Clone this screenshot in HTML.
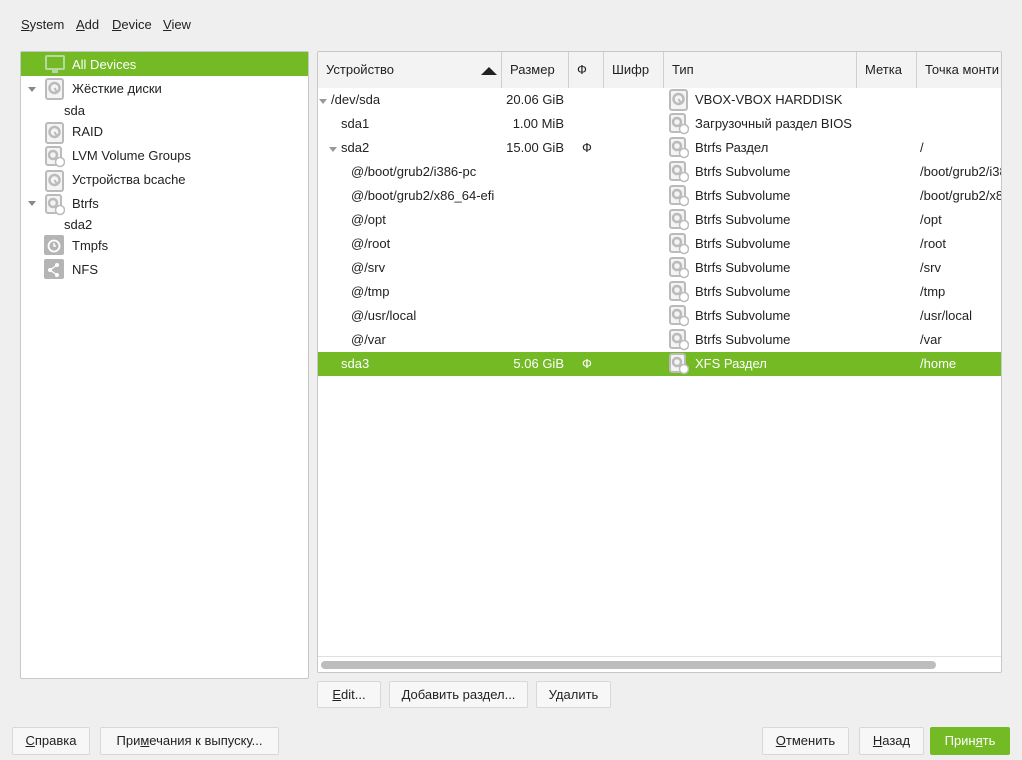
<!DOCTYPE html>
<html><head><meta charset="utf-8"><style>
*{box-sizing:border-box;margin:0;padding:0}
body{width:1022px;height:760px;background:#efefef;font-family:"Liberation Sans","Noto Sans CJK SC",sans-serif;font-size:13px;color:#222;position:relative;overflow:hidden}
.a{position:absolute;white-space:nowrap}
u{text-decoration:underline}
.panel{position:absolute;background:#fff;border:1px solid #c8c8c8;border-radius:2px}
.btn{position:absolute;background:#f7f7f7;border:1px solid #d8d8d8;border-radius:2px;text-align:center;font-size:13px}
.g{background:#73ba25;color:#fff}
.hd{position:absolute;top:0;height:36px;line-height:36px;border-right:1px solid #d0d0d0;padding-left:8px;background:#f3f3f3}
.ic{position:absolute;width:20px;height:22px}
.tri{position:absolute;width:0;height:0;border-left:4px solid transparent;border-right:4px solid transparent;border-top:5px solid #888}
</style></head><body>
<div class="a" style="left:21px;top:17px"><u>S</u>ystem</div>
<div class="a" style="left:76px;top:17px"><u>A</u>dd</div>
<div class="a" style="left:112px;top:17px"><u>D</u>evice</div>
<div class="a" style="left:163px;top:17px"><u>V</u>iew</div>

<svg width="0" height="0" style="position:absolute"><defs>
<g id="hd"><rect x="1" y="1" width="17" height="20" rx="2" fill="#f4f4f4" stroke="#bbb" stroke-width="2"/><circle cx="9.5" cy="10" r="5" fill="none" stroke="#bbb" stroke-width="2.5"/><path d="M9.5 10l3 5" stroke="#bbb" stroke-width="2"/></g>
<g id="hv"><rect x="1" y="1" width="15" height="18" rx="2" fill="#f4f4f4" stroke="#bbb" stroke-width="2"/><circle cx="8" cy="9" r="4" fill="none" stroke="#bbb" stroke-width="2.5"/><circle cx="15" cy="16" r="4.5" fill="#fff" stroke="#bbb" stroke-width="1.5"/></g>
</defs></svg>

<div class="panel" style="left:20px;top:51px;width:289px;height:628px">
 <div class="a g" style="left:0;top:0;width:287px;height:24px"></div>
 <svg class="ic" style="left:24px;top:2px" viewBox="0 0 20 22"><rect x="1" y="2" width="18" height="13" rx="1" fill="none" stroke="#b9d8a0" stroke-width="2"/><rect x="7" y="16" width="6" height="3" fill="#b9d8a0"/></svg>
 <div class="a" style="left:51px;top:5px;color:#fff">All Devices</div>
 <div class="tri" style="left:7px;top:35px"></div>
 <svg class="ic" style="left:24px;top:26px" viewBox="0 0 20 22"><use href="#hd"/></svg>
 <div class="a" style="left:51px;top:29px">Жёсткие диски</div>
 <div class="a" style="left:43px;top:51px">sda</div>
 <svg class="ic" style="left:24px;top:70px" viewBox="0 0 20 22"><use href="#hd"/></svg>
 <div class="a" style="left:51px;top:72px">RAID</div>
 <svg class="ic" style="left:24px;top:94px" viewBox="0 0 20 22"><use href="#hv"/></svg>
 <div class="a" style="left:51px;top:96px">LVM Volume Groups</div>
 <svg class="ic" style="left:24px;top:118px" viewBox="0 0 20 22"><use href="#hd"/></svg>
 <div class="a" style="left:51px;top:120px">Устройства bcache</div>
 <div class="tri" style="left:7px;top:149px"></div>
 <svg class="ic" style="left:24px;top:142px" viewBox="0 0 20 22"><use href="#hv"/></svg>
 <div class="a" style="left:51px;top:144px">Btrfs</div>
 <div class="a" style="left:43px;top:165px">sda2</div>
 <svg class="ic" style="left:23px;top:182px" viewBox="0 0 20 22"><rect x="0" y="1" width="20" height="20" rx="2" fill="#b5b5b5"/><circle cx="10" cy="12" r="5.5" fill="none" stroke="#fff" stroke-width="1.8"/><path d="M10 9v3h2" stroke="#fff" stroke-width="1.5" fill="none"/></svg>
 <div class="a" style="left:51px;top:186px">Tmpfs</div>
 <svg class="ic" style="left:23px;top:206px" viewBox="0 0 20 22"><rect x="0" y="1" width="20" height="20" rx="2" fill="#b5b5b5"/><circle cx="13" cy="7" r="2" fill="#fff"/><circle cx="6" cy="12" r="2" fill="#fff"/><circle cx="13" cy="17" r="2" fill="#fff"/><path d="M13 7L6 12l7 5" stroke="#fff" stroke-width="1.3" fill="none"/></svg>
 <div class="a" style="left:51px;top:210px">NFS</div>
</div>

<div class="panel" style="left:317px;top:51px;width:685px;height:622px;overflow:hidden">
 <div style="position:absolute;left:0;top:0;width:685px;height:36px;background:#f3f3f3;border-bottom:1px solid #d0d0d0"></div>
 <div class="hd" style="left:0;width:184px">Устройство<span style="position:absolute;left:163px;top:15px;width:0;height:0;border-left:8px solid transparent;border-right:8px solid transparent;border-bottom:8px solid #222"></span></div>
 <div class="hd" style="left:184px;width:67px">Размер</div>
 <div class="hd" style="left:251px;width:35px">Ф</div>
 <div class="hd" style="left:286px;width:60px">Шифр</div>
 <div class="hd" style="left:346px;width:193px">Тип</div>
 <div class="hd" style="left:539px;width:60px">Метка</div>
 <div class="hd" style="left:599px;width:100px;border-right:none">Точка монти</div>
 <div class="a g" style="left:0;top:300px;width:685px;height:24px"></div>
 <div id="rows"></div>
 <div style="position:absolute;left:0;top:604px;width:685px;height:1px;background:#e0e0e0"></div>
 <div style="position:absolute;left:3px;top:609px;width:615px;height:8px;background:#bdbdbd;border-radius:4px"></div>
</div>
<script>
var R=[["▾/dev/sda",13,"20.06 GiB","","VBOX-VBOX HARDDISK","","hd"],["sda1",23,"1.00 MiB","","Загрузочный раздел BIOS","","hv"],["▾sda2",23,"15.00 GiB","Ф","Btrfs Раздел","/","hv"],["@/boot/grub2/i386-pc",33,"","","Btrfs Subvolume","/boot/grub2/i386","hv"],["@/boot/grub2/x86_64-efi",33,"","","Btrfs Subvolume","/boot/grub2/x86","hv"],["@/opt",33,"","","Btrfs Subvolume","/opt","hv"],["@/root",33,"","","Btrfs Subvolume","/root","hv"],["@/srv",33,"","","Btrfs Subvolume","/srv","hv"],["@/tmp",33,"","","Btrfs Subvolume","/tmp","hv"],["@/usr/local",33,"","","Btrfs Subvolume","/usr/local","hv"],["@/var",33,"","","Btrfs Subvolume","/var","hv"],["sda3",23,"5.06 GiB","Ф","XFS Раздел","/home","hv"]];
var h="";R.forEach(function(r,i){var t=36+i*24,c=i==11?"color:#fff;":"";var n=r[0];
if(n.charAt(0)=="▾"){n=n.slice(1);h+='<div class="tri" style="left:'+(r[1]-12)+'px;top:'+(t+11)+'px;border-top-color:#999"></div>';}
h+='<div class="a" style="'+c+'left:'+r[1]+'px;top:'+(t+4)+'px;max-width:'+(181-r[1])+'px;overflow:hidden">'+n+'</div>';
h+='<div class="a" style="'+c+'right:'+(685-248)+'px;top:'+(t+4)+'px">'+r[2]+'</div>';
h+='<div class="a" style="'+c+'left:264px;top:'+(t+4)+'px">'+r[3]+'</div>';
h+='<svg class="ic" style="left:351px;top:'+(t+1)+'px" viewBox="0 0 20 22"><use href="#'+r[6]+'"/></svg>';
h+='<div class="a" style="'+c+'left:377px;top:'+(t+4)+'px">'+r[4]+'</div>';
h+='<div class="a" style="'+c+'left:602px;top:'+(t+4)+'px;width:82px;overflow:hidden">'+r[5]+'</div>';});
document.getElementById("rows").innerHTML=h;
</script>

<div class="btn" style="left:317px;top:681px;width:64px;height:27px;line-height:25px"><u>E</u>dit...</div>
<div class="btn" style="left:389px;top:681px;width:139px;height:27px;line-height:25px">Добавить раздел...</div>
<div class="btn" style="left:536px;top:681px;width:75px;height:27px;line-height:25px">Удалить</div>
<div class="btn" style="left:12px;top:727px;width:78px;height:28px;line-height:26px"><u>С</u>правка</div>
<div class="btn" style="left:100px;top:727px;width:179px;height:28px;line-height:26px">При<u>м</u>ечания к выпуску...</div>
<div class="btn" style="left:762px;top:727px;width:87px;height:28px;line-height:26px"><u>О</u>тменить</div>
<div class="btn" style="left:859px;top:727px;width:65px;height:28px;line-height:26px"><u>Н</u>азад</div>
<div class="btn g" style="left:930px;top:727px;width:80px;height:28px;line-height:26px;border-color:#73ba25">Прин<u>я</u>ть</div>
</body></html>
